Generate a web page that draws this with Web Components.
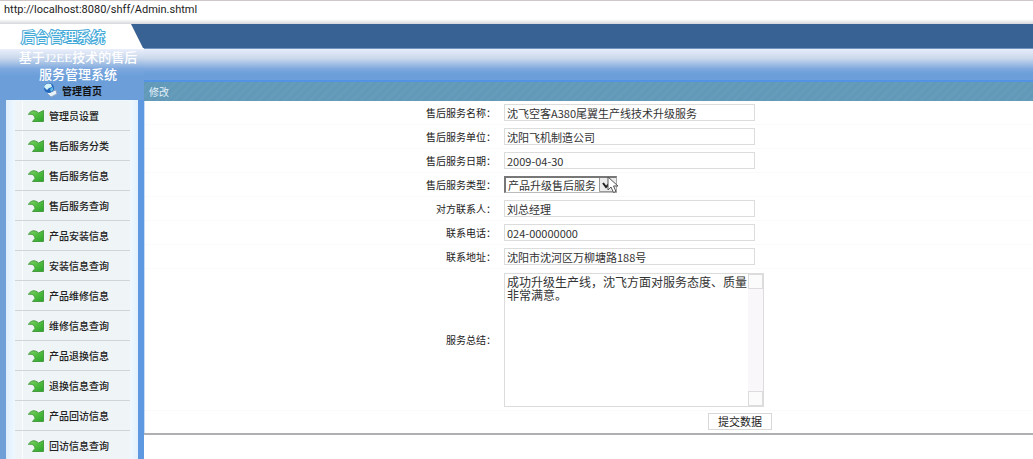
<!DOCTYPE html>
<html lang="zh-CN">
  <head>
    <meta charset="UTF-8" />
    <meta name="viewport" content="width=device-width, initial-scale=1.0" />
    <title>后台管理系统</title>
    <style>
      body {
        margin: 0;
        background: #fff;
        color: #222;
        font-family: "Noto Sans CJK SC", sans-serif;
        font-size: 10px;
      }
    </style>
  </head>
  <body>
    <admin-page>
      <address-bar slot="top" url="http://localhost:8080/shff/Admin.shtml"></address-bar>
      <side-panel slot="side">
        <menu-item>管理员设置</menu-item>
        <menu-item>售后服务分类</menu-item>
        <menu-item>售后服务信息</menu-item>
        <menu-item>售后服务查询</menu-item>
        <menu-item>产品安装信息</menu-item>
        <menu-item>安装信息查询</menu-item>
        <menu-item>产品维修信息</menu-item>
        <menu-item>维修信息查询</menu-item>
        <menu-item>产品退换信息</menu-item>
        <menu-item>退换信息查询</menu-item>
        <menu-item>产品回访信息</menu-item>
        <menu-item>回访信息查询</menu-item>
      </side-panel>
      <form-panel heading="修改">
        <form-field label="售后服务名称：" value="沈飞空客A380尾翼生产线技术升级服务"></form-field>
        <form-field label="售后服务单位：" value="沈阳飞机制造公司"></form-field>
        <form-field label="售后服务日期：" value="2009-04-30"></form-field>
        <form-field label="售后服务类型：" type="select" value="产品升级售后服务"></form-field>
        <form-field label="对方联系人：" value="刘总经理"></form-field>
        <form-field label="联系电话：" value="024-00000000"></form-field>
        <form-field label="联系地址：" value="沈阳市沈河区万柳塘路188号"></form-field>
        <form-field label="服务总结：" type="textarea" value="成功升级生产线，沈飞方面对服务态度、质量非常满意。"></form-field>
      </form-panel>
    </admin-page>

    <script>
      // Attach an open shadow root filled from a template
      function render(host, html) {
        const shadow = host.attachShadow({ mode: "open" });
        const template = document.createElement("template");
        template.innerHTML = html;
        shadow.appendChild(template.content.cloneNode(true));
        return shadow;
      }

      class AdminPage extends HTMLElement {
        constructor() {
          super();
          render(this, `
          <style>
            :host {
              display: flex;
              flex-direction: column;
              height: 100vh;
              overflow: hidden;
            }
            .body {
              flex: 1;
              min-height: 0;
              display: grid;
              grid-template-columns: 144px 1fr;
            }
            .side, main {
              min-height: 0;
              min-width: 0;
            }
            main {
              display: flex;
              flex-direction: column;
            }
            .bar {
              height: 24px;
              background: #386294;
              border-bottom: 1px solid #7394c0;
            }
            .fade {
              height: 31px;
              background: linear-gradient(#e6ecfa, #cbd9ec 30%, #7ca7de 65%, #6c9fd9 80%, #6c9fd9);
            }
          </style>
          <slot name="top"></slot>
          <div class="body">
            <div class="side"><slot name="side"></slot></div>
            <main>
              <div class="bar"></div>
              <div class="fade"></div>
              <slot></slot>
            </main>
          </div>
        `);
        }
      }

      class AddressBar extends HTMLElement {
        constructor() {
          super();
          this.root = render(this, `
          <style>
            :host {
              display: block;
              box-sizing: border-box;
              height: 24px;
              padding-left: 4px;
              border-top: 1px solid #d0c8c8;
              background: linear-gradient(#fff 18px, #d4d8dc);
              font: 11px/18px Roboto, sans-serif;
              color: #222;
            }
          </style>
          <span></span>
        `);
        }

        connectedCallback() {
          this.root.querySelector("span").textContent = this.getAttribute("url");
        }
      }

      class SidePanel extends HTMLElement {
        constructor() {
          super();
          render(this, `
          <style>
            :host {
              display: block;
              background: linear-gradient(90deg, #6f9fd6 138px, #5d98e0 138px);
            }
            header {
              position: relative;
              height: 76px;
              text-align: center;
              background: linear-gradient(#fff 22px, #e6ecfa 26px, #cbd9ec 34px, #7ca7de 45px, #6c9fd9 52px);
            }
            .tab {
              display: block;
              width: 100%;
              height: 25px;
            }
            .brand {
              position: absolute;
              left: 21px;
              top: 0;
              font-size: 14px;
              line-height: 25px;
              color: #fff;
              -webkit-text-stroke: 2px #45a9d8;
              paint-order: stroke fill;
            }
            h1 {
              margin: 0;
              padding-left: 12px;
              font: 500 13px/17px "Liberation Serif", "Noto Sans CJK SC", serif;
              color: #fff;
            }
            .home {
              display: flex;
              justify-content: center;
              align-items: center;
              gap: 4px;
              line-height: 16px;
              color: #111;
              text-decoration: none;
            }
            nav {
              margin: 0 6px;
              padding: 1px 8px 0 9px;
              background: linear-gradient(90deg, #dfeefc, #eff8ff 9px, #eff8ff 124px, #e2f0fd);
            }
          </style>
          <header>
            <svg class="tab" viewBox="0 0 144 25" preserveAspectRatio="none">
              <path d="M0 0H131L143 24V25H0Z" fill="#fff" />
              <path d="M131 0H144V24H143Z" fill="#386294" />
            </svg>
            <span class="brand">后台管理系统</span>
            <h1>基于J2EE技术的售后<br />服务管理系统</h1>
            <a class="home" href="#">
              <svg width="16" height="16" viewBox="0 0 16 16">
                <path d="M5 10L14 7L15 11L9 14Z" fill="#e8f1f8" stroke="#8ba4c4" />
                <circle cx="7" cy="5" r="5" fill="#2468bd" />
                <path d="M2 4Q4 -1 9 1L10 4L7 5L5 7Z" fill="#d5f3f6" />
                <path d="M8 6L11 4L11 7L9 9Z" fill="#60bce4" />
              </svg>
              <b>管理首页</b>
            </a>
          </header>
          <nav><slot></slot></nav>
        `);
        }
      }

      class MenuItem extends HTMLElement {
        constructor() {
          super();
          render(this, `
          <style>
            :host {
              display: block;
              background: linear-gradient(90deg, #eff4f7 7px, #fafcfd 7px 8px, #eff4f7 8px);
              border-bottom: 1px solid #d0d5d8;
            }
            a {
              display: flex;
              align-items: center;
              gap: 5px;
              height: 29px;
              padding-left: 13px;
              color: #222;
              font-weight: 500;
              text-decoration: none;
            }
          </style>
          <a href="#">
            <svg width="16" height="13" viewBox="0 0 16 13">
              <defs>
                <linearGradient id="leaf" x1="0" y1="0" x2="1" y2="1">
                  <stop offset="0" stop-color="#7fd168" />
                  <stop offset="0.5" stop-color="#4fbc3f" />
                  <stop offset="1" stop-color="#2ba32c" />
                </linearGradient>
              </defs>
              <path d="M0.5 5.5C2 2 6.500 0 10.500 4L15.500 1.500V12.500H4.500L7 9.500C6.500 6 4 4.500 0.500 5.500Z" fill="url(#leaf)" stroke="#4a9c42" stroke-linejoin="round" />
            </svg>
            <span><slot></slot></span>
          </a>
        `);
        }
      }

      class FormPanel extends HTMLElement {
        constructor() {
          super();
          this.root = render(this, `
          <style>
            :host {
              display: block;
              border-top: 2px solid #5393e3;
              border-bottom: 2px solid #b0b0b4;
            }
            h2 {
              margin: 0;
              padding-left: 5px;
              font-size: 10px;
              font-weight: normal;
              line-height: 19px;
              color: #e4f1fa;
              background: repeating-linear-gradient(135deg, #6299b8 0 3px, #659cb9 3px 6px);
            }
            form {
              border-left: 1px solid #c8dcf2;
            }
            footer {
              padding: 2px 0 3px 563px;
            }
            button {
              display: block;
              width: 64px;
              height: 17px;
              padding: 0;
              border: 1px solid #d8d8d8;
              background: #fff;
              color: #222;
              font: 11px/15px "Noto Sans CJK SC", sans-serif;
            }
          </style>
          <h2></h2>
          <form>
            <slot></slot>
            <footer><button type="button">提交数据</button></footer>
          </form>
        `);
        }

        connectedCallback() {
          this.root.querySelector("h2").textContent = this.getAttribute("heading");
        }
      }

      class FormField extends HTMLElement {
        connectedCallback() {
          const type = this.getAttribute("type");
          const value = this.getAttribute("value");
          let control = `<input id="field" type="text" value="${value}" />`;
          if (type === "select") {
            control = `
            <span class="picker">
              <select id="field"><option>${value}</option></select>
              <svg class="arrow" width="17" height="14" viewBox="0 0 17 14">
                <path d="M0.5 0V13.500H17" fill="none" stroke="#999" />
                <path d="M4 5L7 9L10 6" fill="none" stroke="#222" stroke-width="2" />
              </svg>
              <svg class="pointer" width="12" height="18" viewBox="0 0 12 18">
                <path d="M1 1V14L4 11L6.500 16.500L9 15.500L6.500 10H11Z" fill="#fff" stroke="#555" />
              </svg>
            </span>`;
          }
          if (type === "textarea") {
            control = `
            <span class="area">
              <textarea id="field">${value}</textarea>
              <span class="scroll"><i></i><i></i></span>
            </span>`;
          }
          render(this, `
          <style>
            :host {
              display: grid;
              grid-template-columns: 351px minmax(0, 1fr);
              column-gap: 8px;
              align-items: center;
              box-sizing: border-box;
              min-height: 24px;
              border-bottom: 1px solid #fafafa;
            }
            label {
              text-align: right;
              line-height: 16px;
            }
            input, select, textarea {
              box-sizing: border-box;
              margin: 0;
              border: 1px solid #dcdcdc;
              border-radius: 0;
              outline: 0;
              background: #fff;
              color: #333;
              font: 11px/14px "Noto Sans CJK SC", sans-serif;
            }
            input {
              width: 251px;
              height: 17px;
              padding: 0 2px;
            }
            .picker {
              position: relative;
              display: block;
              width: 113px;
              height: 17px;
            }
            select {
              display: block;
              appearance: none;
              width: 100%;
              height: 17px;
              padding: 0 17px 0 2px;
              border-color: #777 #aaa #bbb #777;
              border-width: 2px 1px 1px 2px;
            }
            .arrow {
              position: absolute;
              right: 1px;
              top: 2px;
              background: #ececec;
              pointer-events: none;
            }
            .pointer {
              position: absolute;
              right: -2px;
              top: 0;
              pointer-events: none;
            }
            .area {
              display: flex;
              box-sizing: border-box;
              width: 260px;
              height: 134px;
              margin: 4px 0 3px;
              border: 1px solid #dcdcdc;
            }
            textarea {
              flex: 1;
              min-width: 0;
              padding: 1px 0 0 2px;
              border: 0;
              resize: none;
              overflow: hidden;
              font-size: 12px;
              line-height: 13px;
            }
            .scroll {
              display: flex;
              flex-direction: column;
              justify-content: space-between;
              width: 15px;
              background: #f9f7fa;
            }
            i {
              box-sizing: border-box;
              height: 15px;
              border: 1px solid #dcdcdc;
              background: #fbfbfb;
            }
          </style>
          <label for="field">${this.getAttribute("label")}</label>
          ${control}
        `);
        }
      }

      customElements.define("admin-page", AdminPage);
      customElements.define("address-bar", AddressBar);
      customElements.define("side-panel", SidePanel);
      customElements.define("menu-item", MenuItem);
      customElements.define("form-panel", FormPanel);
      customElements.define("form-field", FormField);
    </script>
  </body>
</html>
